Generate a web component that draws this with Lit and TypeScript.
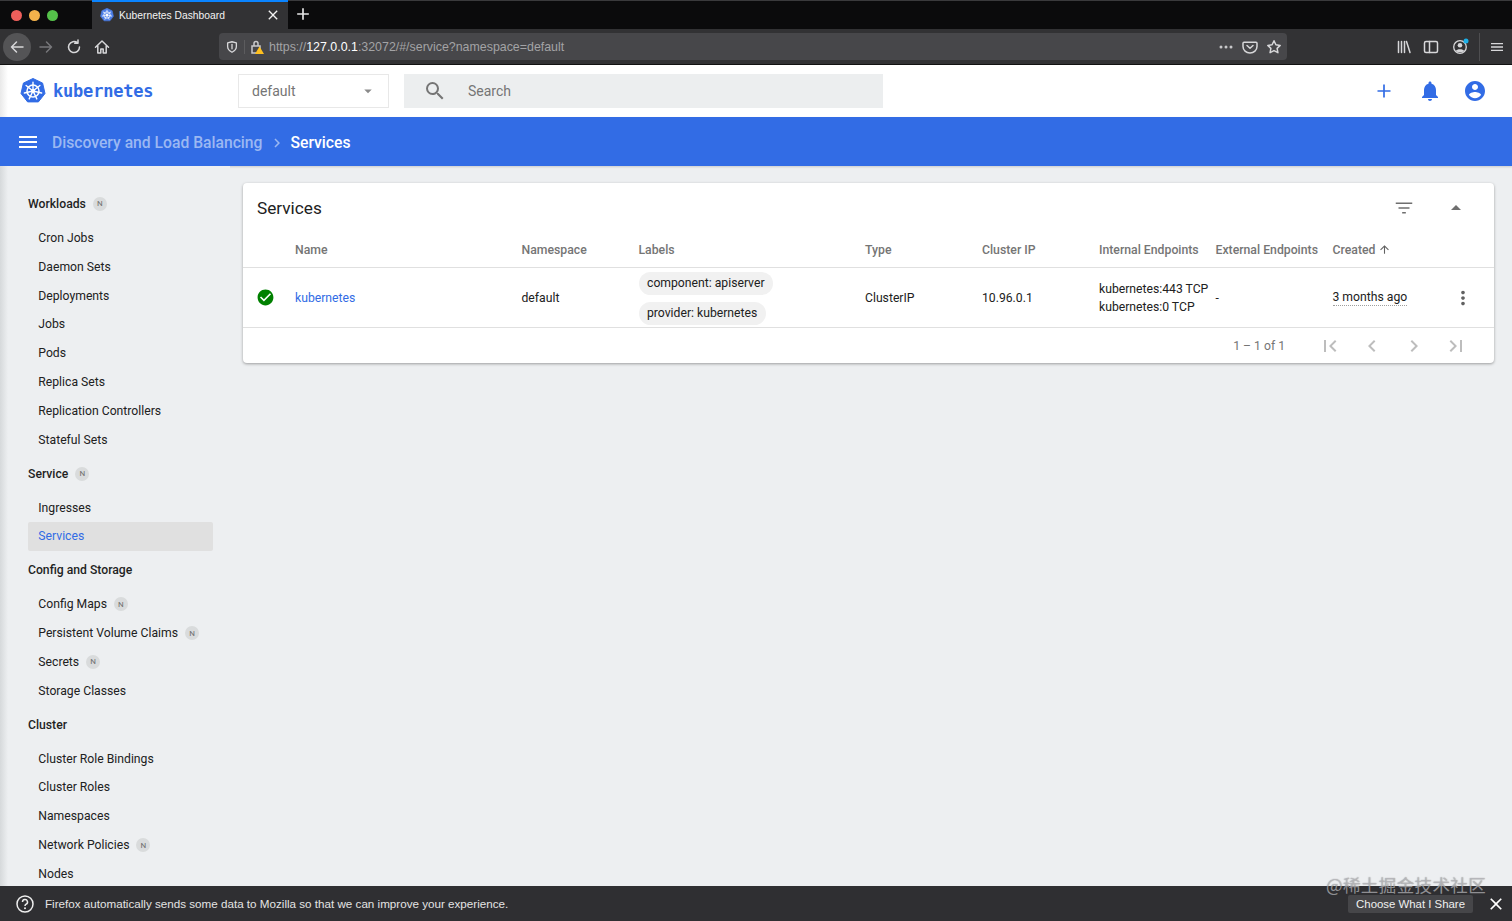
import { LitElement, html, css, svg } from 'lit';
import { customElement } from 'lit/decorators.js';

const P = {
  search: 'M15.5 14h-.79l-.28-.27A6.471 6.471 0 0 0 16 9.5 6.5 6.5 0 1 0 9.5 16c1.61 0 3.09-.59 4.23-1.57l.27.28v.79l5 4.99L20.49 19l-4.99-5zm-6 0C7.01 14 5 11.99 5 9.5S7.01 5 9.5 5 14 7.01 14 9.5 11.99 14 9.5 14z',
  add: 'M19 13h-6v6h-2v-6H5v-2h6V5h2v6h6v2z',
  bell: 'M12 22c1.1 0 2-.9 2-2h-4c0 1.1.89 2 2 2zm6-6v-5c0-3.07-1.64-5.64-4.5-6.32V4c0-.83-.67-1.5-1.5-1.5s-1.5.67-1.5 1.5v.68C7.63 5.36 6 7.92 6 11v5l-2 2v1h16v-1l-2-2z',
  account: 'M12 2C6.48 2 2 6.48 2 12s4.48 10 10 10 10-4.48 10-10S17.52 2 12 2zm0 3c1.66 0 3 1.34 3 3s-1.34 3-3 3-3-1.34-3-3 1.34-3 3-3zm0 14.2c-2.5 0-4.71-1.28-6-3.22.03-1.99 4-3.08 6-3.08 1.99 0 5.97 1.09 6 3.08-1.29 1.94-3.5 3.22-6 3.22z',
  menu: 'M3 18h18v-2H3v2zm0-5h18v-2H3v2zm0-7v2h18V6H3z',
  filter: 'M10 18h4v-1.6h-4v1.600zM3 6v1.600h18V6H3zm3 6.800h12v-1.600H6v1.600z',
  dropUp: 'M7 14l5-5 5 5z',
  dropDown: 'M7 10l5 5 5-5z',
  up: 'M4 12l1.41 1.41L11 7.83V20h2V7.83l5.58 5.59L20 12l-8-8-8 8z',
  more: 'M12 8c1.1 0 2-.9 2-2s-.9-2-2-2-2 .9-2 2 .9 2 2 2zm0 2c-1.1 0-2 .9-2 2s.9 2 2 2 2-.9 2-2-.9-2-2-2zm0 6c-1.1 0-2 .9-2 2s.9 2 2 2 2-.9 2-2-.9-2-2-2z',
  check: 'M12 2C6.48 2 2 6.48 2 12s4.48 10 10 10 10-4.48 10-10S17.52 2 12 2zm-2 15l-5-5 1.41-1.41L10 14.17l7.59-7.59L19 8l-9 9z',
  first: 'M18.41 16.59L13.82 12l4.59-4.59L17 6l-6 6 6 6zM6 6h2v12H6z',
  prev: 'M15.41 7.41L14 6l-6 6 6 6 1.41-1.41L10.83 12z',
  next: 'M10 6L8.59 7.41 13.17 12l-4.58 4.59L10 18l6-6z',
  last: 'M5.59 7.41L10.18 12l-4.59 4.59L7 18l6-6-6-6zM16 6h2v12h-2z',
  close: 'M19 6.41L17.59 5 12 10.59 6.41 5 5 6.41 10.59 12 5 17.59 6.41 19 12 13.41 17.59 19 19 17.59 13.41 12z',
};

const icon = (d: string, size = 24, color = 'currentColor') => html`
  <svg width=${size} height=${size} viewBox="0 0 24 24" fill=${color}><path d=${d}></path></svg>
`;

// stroke icons used by the browser toolbar
const line = (body: unknown, size = 16, color = '#d7d7d9') => html`
  <svg width=${size} height=${size} viewBox="0 0 16 16" fill="none" stroke=${color} stroke-width="1.5"
    stroke-linecap="round" stroke-linejoin="round">${body}</svg>
`;

// kubernetes helm: heptagon, ring, seven spokes
const wheel = (size: number, bg: string) => html`
  <svg width=${size} height=${size} viewBox="0 0 26 26">
    <path d="M13 .5l9.6 4.6 2.4 10.4-6.6 8.4H7.6L1 15.5 3.4 5.1z" fill=${bg} stroke=${bg} stroke-width="1" stroke-linejoin="round"></path>
    <g fill="none" stroke="#fff">
      <circle cx="13" cy="13" r="6" stroke-width="1.5"></circle>
      <path stroke-width="1.4" stroke-linecap="round"
        d="M13 13V4.200M13 13L19.900 7.500M13 13L21.600 15M13 13L16.800 20.900M13 13L9.200 20.900M13 13L4.400 15M13 13L6.100 7.500"></path>
    </g>
    <circle cx="13" cy="13" r="2" fill="#fff"></circle>
  </svg>
`;

type NavItem = { name: string; n?: boolean; active?: boolean };
type NavGroup = { title: string; n?: boolean; items: NavItem[] };

const NAV: NavGroup[] = [
  {
    title: 'Workloads',
    n: true,
    items: ['Cron Jobs', 'Daemon Sets', 'Deployments', 'Jobs', 'Pods', 'Replica Sets', 'Replication Controllers', 'Stateful Sets'].map((name) => ({ name })),
  },
  {
    title: 'Service',
    n: true,
    items: [{ name: 'Ingresses' }, { name: 'Services', active: true }],
  },
  {
    title: 'Config and Storage',
    items: [
      { name: 'Config Maps', n: true },
      { name: 'Persistent Volume Claims', n: true },
      { name: 'Secrets', n: true },
      { name: 'Storage Classes' },
    ],
  },
  {
    title: 'Cluster',
    items: [
      { name: 'Cluster Role Bindings' },
      { name: 'Cluster Roles' },
      { name: 'Namespaces' },
      { name: 'Network Policies', n: true },
      { name: 'Nodes' },
    ],
  },
];

const COLUMNS = ['', 'Name', 'Namespace', 'Labels', 'Type', 'Cluster IP', 'Internal Endpoints', 'External Endpoints'];

@customElement('app-root')
export class AppRoot extends LitElement {
  static styles = css`
    :host {
      display: block;
      height: 921px;
      overflow: hidden;
      position: relative;
      font-family: Roboto, 'Liberation Sans', sans-serif;
      font-size: 12.2px;
      color: #212121;
      background: #edeff1;
    }
    .page {
      display: flex;
      flex-direction: column;
      height: 921px;
    }

    /* browser chrome */
    .tabs {
      display: flex;
      align-items: stretch;
      height: 29px;
      flex: none;
      background: #0b0b0c;
      border-top: 1px solid #3a3a3c;
      box-sizing: border-box;
    }
    .lights {
      display: flex;
      align-items: center;
      gap: 7px;
      width: 92px;
      padding-left: 11px;
      box-sizing: border-box;
    }
    .lights i {
      width: 11px;
      height: 11px;
      border-radius: 50%;
    }
    .tab {
      display: flex;
      align-items: center;
      width: 196px;
      box-sizing: border-box;
      padding: 0 7px 1px 8px;
      gap: 5px;
      background: #323234;
      border-top: 2px solid #0a84ff;
      margin-top: -1px;
      color: #f2f2f2;
      font: 10.3px 'Liberation Sans', sans-serif;
    }
    .tab span {
      flex: 1;
    }
    .new-tab {
      display: flex;
      align-items: center;
      padding: 0 0 2px 5px;
      color: #e5e5e5;
    }
    .toolbar {
      display: flex;
      align-items: center;
      height: 36px;
      flex: none;
      background: #323234;
      border-bottom: 1px solid #111;
      box-sizing: border-box;
      padding-left: 3px;
    }
    .back {
      display: flex;
      align-items: center;
      justify-content: center;
      width: 28px;
      height: 28px;
      border-radius: 50%;
      background: #545456;
    }
    .tool {
      display: flex;
      justify-content: center;
      width: 28px;
    }
    .nav-tools {
      display: flex;
      align-items: center;
      width: 216px;
    }
    .urlbar {
      display: flex;
      align-items: center;
      width: 1068px;
      height: 27px;
      box-sizing: border-box;
      border-radius: 4px;
      background: #47474a;
      color: #a3a3a5;
      font: 12.4px 'Liberation Sans', sans-serif;
    }
    .urlbar .shield {
      width: 25px;
      display: flex;
      justify-content: center;
      border-right: 1px solid #5c5c5e;
    }
    .urlbar .lock {
      width: 24px;
      display: flex;
      justify-content: center;
    }
    .urlbar b {
      font-weight: 400;
      color: #fff;
    }
    .urlbar .addr {
      flex: 1;
    }
    .url-actions {
      display: flex;
      align-items: center;
      gap: 8px;
      padding-right: 5px;
    }
    .browser-right {
      flex: 1;
      display: flex;
      align-items: center;
      padding-left: 109px;
      gap: 11px;
    }
    .browser-right .sep {
      width: 1px;
      height: 28px;
      background: #4e4e50;
    }

    /* app header */
    .header {
      display: flex;
      align-items: center;
      height: 52px;
      flex: none;
      background: linear-gradient(90deg, #e9e9e9 0, #fff 8px);
      box-sizing: border-box;
    }
    .brand {
      display: flex;
      align-items: center;
      gap: 7px;
      width: 238px;
      padding-left: 20px;
      box-sizing: border-box;
      color: #326ce5;
      font: 700 17px 'DejaVu Sans Mono', monospace;
      letter-spacing: -0.2px;
    }
    .ns {
      display: flex;
      align-items: center;
      justify-content: space-between;
      width: 151px;
      height: 34px;
      box-sizing: border-box;
      padding: 0 11px 0 13px;
      border: 1px solid #e8e8e8;
      color: #757575;
      font-size: 14px;
    }
    .search {
      display: flex;
      align-items: center;
      width: 479px;
      height: 34px;
      margin-left: 15px;
      padding-left: 19px;
      box-sizing: border-box;
      gap: 21px;
      background: #eceeef;
      color: #757575;
      font-size: 14px;
    }
    .actions {
      flex: 1;
      display: flex;
      justify-content: flex-end;
      gap: 21.5px;
      padding-right: 25px;
      color: #326ce5;
    }
    .plus {
      fill: none;
      stroke: currentColor;
      stroke-width: 1.7;
    }

    /* breadcrumb bar */
    .crumbs {
      display: flex;
      align-items: center;
      height: 49px;
      flex: none;
      padding: 2px 0 0 16px;
      box-sizing: border-box;
      background: #326ce5;
      color: #fff;
      font-size: 15.7px;
      font-weight: 500;
      box-shadow: 0 1px 2px rgba(0, 0, 0, 0.15);
    }
    .crumbs > svg {
      margin: -2px 12px 0 0;
    }
    .crumbs .parent {
      color: #9bb8f2;
    }
    .crumbs .chev {
      display: flex;
      margin: 0 5px;
      color: #9bb8f2;
    }

    /* body */
    .body {
      flex: 1;
      display: flex;
      min-height: 0;
    }
    .side {
      width: 230px;
      flex: none;
      padding: 18.4px 17px 0 28px;
      box-sizing: border-box;
      overflow: hidden;
      background: linear-gradient(90deg, #d6d9db 0, #edeff1 8px);
    }
    .group-title {
      display: flex;
      align-items: center;
      height: 39.2px;
      font-weight: 500;
      color: #1f1f1f;
    }
    .item {
      display: flex;
      align-items: center;
      height: 28.8px;
      padding-left: 10.3px;
      color: #212121;
    }
    .item.active {
      color: #326ce5;
      background: #e0e0e0;
      border-radius: 2px;
    }
    .n {
      display: flex;
      align-items: center;
      justify-content: center;
      width: 14px;
      height: 14px;
      margin-left: 7px;
      border-radius: 50%;
      background: #d9dbdc;
      color: #6f6f6f;
      font-size: 8px;
      font-weight: 400;
    }
    .main {
      flex: 1;
      min-width: 0;
      padding: 17px 18px 0 13px;
    }
    .card {
      background: #fff;
      border-radius: 4px;
      box-shadow: 0 1px 3px rgba(0, 0, 0, 0.35);
    }
    .card-title {
      display: flex;
      align-items: center;
      height: 50px;
      padding: 0 26px 0 14px;
      box-sizing: border-box;
      font-size: 17.2px;
    }
    .card-title span {
      flex: 1;
    }
    .card-title .tools {
      display: flex;
      align-items: center;
      gap: 29px;
      color: #6f6f6f;
    }
    .grid {
      display: grid;
      grid-template-columns: 52px 226.5px 117px 226.5px 117px 117px 116.5px 117px 1fr 62px;
      align-items: center;
      border-bottom: 1px solid #e0e0e0;
      white-space: nowrap;
    }
    .head {
      height: 35px;
      box-sizing: border-box;
      padding-bottom: 1px;
      color: #757575;
      font-size: 12.25px;
      font-weight: 500;
    }
    .created {
      display: flex;
      align-items: center;
      gap: 3px;
    }
    .row {
      height: 60px;
      box-sizing: border-box;
    }
    .status {
      display: flex;
      justify-content: center;
      width: 42px;
      box-sizing: border-box;
      padding-left: 2px;
    }
    .link {
      color: #326ce5;
    }
    .chips {
      display: flex;
      flex-direction: column;
      align-items: flex-start;
      gap: 6.5px;
      margin-top: 2px;
    }
    .chip {
      height: 23px;
      line-height: 23px;
      padding: 0 8.5px;
      border-radius: 12px;
      background: #f1f1f1;
    }
    .endpoints {
      line-height: 18px;
    }
    .age {
      justify-self: start;
      border-bottom: 1px dotted #9e9e9e;
      line-height: 15px;
      margin-top: 1px;
    }
    .kebab {
      display: flex;
      justify-content: center;
      color: #616161;
    }
    .pager {
      display: flex;
      align-items: center;
      justify-content: flex-end;
      height: 35px;
      padding-right: 26px;
      color: #757575;
      box-sizing: border-box;
    }
    .pager .range {
      margin-right: 33px;
    }
    .pager .btns {
      display: flex;
      gap: 18px;
      color: #bdbdbd;
    }

    /* data notice */
    .notice {
      display: flex;
      align-items: center;
      height: 35px;
      flex: none;
      padding-left: 16px;
      box-sizing: border-box;
      background: #2f2f32;
      color: #e4e4e4;
      font: 11.65px 'Liberation Sans', sans-serif;
      gap: 11px;
      z-index: 1;
    }
    .notice .msg {
      flex: 1;
    }
    .notice .share {
      padding: 3px 8px;
      border-radius: 2px;
      background: #464649;
      color: #f0f0f0;
      font-size: 11.4px;
    }
    .notice .x {
      display: flex;
      padding-right: 6px;
      margin-left: 2px;
      color: #fff;
    }
    .watermark {
      position: absolute;
      left: 1326px;
      top: 872px;
      z-index: 2;
      font: 17.5px 'Noto Sans CJK SC', sans-serif;
      letter-spacing: 0.4px;
      color: rgba(205, 205, 210, 0.6);
      text-shadow: 0 0 1px rgba(60, 60, 60, 0.6);
    }
  `;

  private renderBrowser() {
    return html`
      <div class="tabs">
        <div class="lights">
          <i style="background:#ee5f5b"></i><i style="background:#f4b24b"></i><i style="background:#55c14a"></i>
        </div>
        <div class="tab">
          ${wheel(14, '#4d7fe8')}
          <span>Kubernetes Dashboard</span>
          ${icon(P.close, 16, '#f2f2f2')}
        </div>
        <div class="new-tab">${icon(P.add, 20)}</div>
      </div>
      <div class="toolbar">
        <div class="nav-tools">
          <div class="back">${line(svg`<path d="M14 8H2.5M7.5 3L2.5 8l5 5" />`)}</div>
          <div class="tool" style="margin-left:1px">${line(svg`<path d="M2 8h11.5M8.5 3l5 5-5 5" />`, 16, '#77777a')}</div>
          <div class="tool">${line(svg`<path d="M13.5 8A5.5 5.5 0 1 1 11.5 3.8M12 1v3.3H8.7" />`)}</div>
          <div class="tool">${line(svg`<path d="M1.5 8.2L8 2l6.5 6.2M3.8 7v7h3V10h2.4v4h3V7" />`)}</div>
        </div>
        <div class="urlbar">
          <div class="shield">${line(svg`<path d="M8 2l5 1.3v4.2c0 3.2-2.2 5.2-5 6.5-2.8-1.3-5-3.3-5-6.5V3.3z" /><path d="M8 5v5" />`, 14)}</div>
          <div class="lock">
            <svg width="16" height="16" viewBox="0 0 16 16">
              <path d="M3 7h8v7H3zM5 7V4.5a2 2 0 0 1 4 0V7" fill="none" stroke="#c9c9cb" stroke-width="1.5"></path>
              <path d="M10.5 7.5l4.5 7.5H6z" fill="#ffc01f"></path>
            </svg>
          </div>
          <div class="addr">https://<b>127.0.0.1</b>:32072/#/service?namespace=default</div>
          <div class="url-actions">
            <svg width="16" height="16" viewBox="0 0 16 16" fill="#c8c8ca">
              <circle cx="3" cy="8" r="1.5"></circle><circle cx="8" cy="8" r="1.5"></circle><circle cx="13" cy="8" r="1.5"></circle>
            </svg>
            ${line(svg`<path d="M2 3.2h12c.6 0 1 .4 1 1V7.500a7 6.500 0 0 1-14 0V4.200c0-.6.4-1 1-1z" /><path d="M5 6.500l3 2.800 3-2.800" />`)}
            ${line(svg`<path d="M8 1.800l1.900 4 4.300.6-3.100 3 .8 4.300L8 11.600l-3.900 2.100.8-4.300-3.100-3 4.300-.6z" />`)}
          </div>
        </div>
        <div class="browser-right">
          ${line(svg`<path d="M2.500 2.500v11M5.500 2.500v11M8.500 2.500v11M10.500 2.500l3.500 11" />`)}
          ${line(svg`<rect x="1.500" y="2.500" width="13" height="11" rx="1.500" /><path d="M6.500 2.500v11" />`)}
          <svg width="16" height="16" viewBox="0 0 16 16" style="margin-left:2px;overflow:visible">
            <circle cx="8" cy="8" r="6.300" fill="none" stroke="#d7d7d9" stroke-width="1.300"></circle>
            <circle cx="8" cy="6.300" r="2.300" fill="#d7d7d9"></circle>
            <path d="M3.800 12c1-2.200 7.400-2.200 8.400 0-2 1.800-6.400 1.800-8.400 0z" fill="#d7d7d9"></path>
            <circle cx="14" cy="2" r="2.500" fill="#1cb0e8"></circle>
          </svg>
          <div class="sep"></div>
          <span style="display:flex;margin-left:-2px">${icon(P.menu, 16, '#d7d7d9')}</span>
        </div>
      </div>
    `;
  }

  private renderHeader() {
    return html`
      <div class="header">
        <div class="brand">${wheel(26, '#326ce5')}<span>kubernetes</span></div>
        <div class="ns"><span>default</span>${icon(P.dropDown, 18, '#8a8a8a')}</div>
        <div class="search">${icon(P.search, 24, '#757575')}<span>Search</span></div>
        <div class="actions">
          <svg width="24" height="24" viewBox="0 0 24 24"><path class="plus" d="M12 5.500v13M5.500 12h13"></path></svg>
          ${icon(P.bell)}${icon(P.account)}
        </div>
      </div>
      <div class="crumbs">
        ${icon(P.menu)}
        <span class="parent">Discovery and Load Balancing</span>
        <span class="chev">${icon(P.next, 18)}</span>
        <span>Services</span>
      </div>
    `;
  }

  private renderSide() {
    return html`
      <nav class="side">
        ${NAV.map(
          (g) => html`
            <div class="group-title">${g.title}${g.n ? html`<span class="n">N</span>` : ''}</div>
            ${g.items.map(
              (i) => html`
                <div class="item ${i.active ? 'active' : ''}">${i.name}${i.n ? html`<span class="n">N</span>` : ''}</div>
              `,
            )}
          `,
        )}
      </nav>
    `;
  }

  private renderCard() {
    return html`
      <section class="card">
        <div class="card-title">
          <span>Services</span>
          <div class="tools">${icon(P.filter, 22)}${icon(P.dropUp)}</div>
        </div>
        <div class="grid head">
          ${COLUMNS.map((c) => html`<div>${c}</div>`)}
          <div class="created">Created ${icon(P.up, 13, '#616161')}</div>
          <div></div>
        </div>
        <div class="grid row">
          <div class="status">${icon(P.check, 19, '#008000')}</div>
          <div class="link">kubernetes</div>
          <div>default</div>
          <div class="chips">
            <div class="chip">component: apiserver</div>
            <div class="chip">provider: kubernetes</div>
          </div>
          <div>ClusterIP</div>
          <div>10.96.0.1</div>
          <div class="endpoints">kubernetes:443 TCP<br />kubernetes:0 TCP</div>
          <div>-</div>
          <div class="age">3 months ago</div>
          <div class="kebab">${icon(P.more, 22)}</div>
        </div>
        <div class="pager">
          <span class="range">1 – 1 of 1</span>
          <div class="btns">${icon(P.first)}${icon(P.prev)}${icon(P.next)}${icon(P.last)}</div>
        </div>
      </section>
    `;
  }

  render() {
    return html`
      <div class="page">
        ${this.renderBrowser()} ${this.renderHeader()}
        <div class="body">
          ${this.renderSide()}
          <main class="main">${this.renderCard()}</main>
        </div>
        <div class="notice">
          <svg width="18" height="18" viewBox="0 0 18 18">
            <circle cx="9" cy="9" r="8" fill="none" stroke="#eee" stroke-width="1.500"></circle>
            <path d="M6.500 7a2.500 2.500 0 1 1 3.700 2.200c-.8.500-1.200.9-1.200 1.800" fill="none" stroke="#eee" stroke-width="1.500"></path>
            <circle cx="9" cy="13.300" r="1" fill="#eee"></circle>
          </svg>
          <span class="msg">Firefox automatically sends some data to Mozilla so that we can improve your experience.</span>
          <span class="share">Choose What I Share</span>
          <span class="x">${icon(P.close, 20)}</span>
        </div>
      </div>
      <div class="watermark">@稀土掘金技术社区</div>
    `;
  }
}
